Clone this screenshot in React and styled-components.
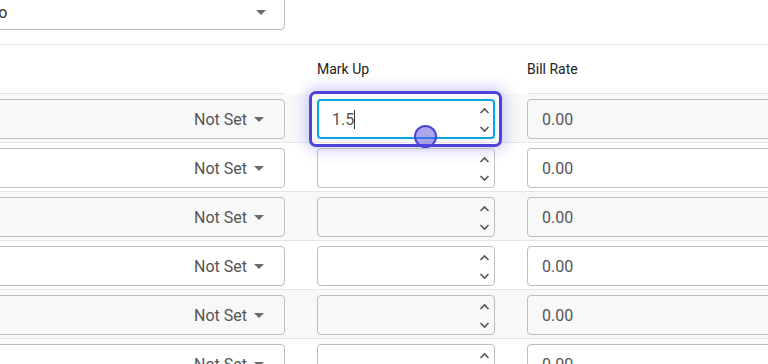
import React from 'react';
import styled, { createGlobalStyle, css } from 'styled-components';

const GlobalStyle = createGlobalStyle`
	body {
		margin: 0;
		background: #fff;
		font-family: Roboto, 'Liberation Sans', sans-serif;
		overflow: hidden;
	}
`;

const Page = styled.div`
	width: 768px;
	height: 364px;
	overflow: hidden;
`;

const Frame = styled.div`
	margin-left: -40px;
	width: 900px;
`;

const TopBar = styled.div`
	margin-top: -10px;
	padding-bottom: 14px;
	border-bottom: 1px solid #e5e5e5;
`;

const SelectBox = styled.div`
	width: 325px;
	height: 40px;
	box-sizing: border-box;
	border: 1px solid #bdbdbd;
	border-radius: 4px;
	display: flex;
	align-items: center;
	justify-content: space-between;
	padding: 4px 18px 0 13px;
	font-size: 16px;
	color: #333;
	background: #fff;
`;

const Caret = styled.span`
	width: 0;
	height: 0;
	border-left: 5px solid transparent;
	border-right: 5px solid transparent;
	border-top: 5px solid #6b6b6b;
	margin-left: ${(p) => p.$gap || 0}px;
`;

const Grid = styled.div`
	display: grid;
	grid-template-columns: 325px 178px 300px;
	column-gap: 32px;
`;

const HeadRow = styled.div`
	display: contents;
`;

const HeadCell = styled.div`
	height: 49px;
	border-bottom: 1px solid #e5e5e5;
	font-size: 14px;
	color: #222;
	padding-top: 16px;
	box-sizing: border-box;
`;

const Row = styled.div`
	grid-column: 1 / -1;
	display: grid;
	grid-template-columns: 325px 178px 300px;
	column-gap: 32px;
	padding: 5px 200px 3px;
	margin: 0 -200px;
	border-bottom: 1px solid #e5e5e5;
	background: ${(p) => (p.$shaded ? '#f8f8f8' : '#fff')};
`;

const fieldBase = css`
	height: 40px;
	box-sizing: border-box;
	border: 1px solid #bdbdbd;
	border-radius: 4px;
	display: flex;
	align-items: center;
	font-size: 16px;
	color: #555;
`;

const StatusSelect = styled.div`
	${fieldBase}
	justify-content: flex-end;
	padding-right: 20px;
`;

const NumberWrap = styled.div`
	position: relative;
`;

const NumberField = styled.div`
	${fieldBase}
	justify-content: space-between;
	padding: 0 4px 0 14px;
	${(p) =>
		p.$focused &&
		css`
			border: 2px solid #08a5e3;
			background: #fff;
			padding-left: 13px;
			padding-right: 3px;
		`}
`;

const Value = styled.span`
	color: #555;
`;

const TextCaret = styled.span`
	display: inline-block;
	width: 1px;
	height: 19px;
	background: #333;
	vertical-align: -4px;
`;

const Spinner = styled.div`
	display: flex;
	flex-direction: column;
	gap: 12px;
	align-items: center;
	padding-top: 1px;
`;

const FocusRing = styled.div`
	position: absolute;
	inset: -8px -7px -8px -8px;
	border: 3px solid #4b43d9;
	border-radius: 7px;
	box-shadow: 0 0 14px 3px rgba(85, 75, 230, 0.3);
	pointer-events: none;
`;

const ClickDot = styled.div`
	position: absolute;
	left: 97px;
	top: 26px;
	width: 19px;
	height: 19px;
	border-radius: 50%;
	border: 2px solid #4b43d9;
	background: rgba(90, 80, 220, 0.5);
	pointer-events: none;
`;

const RateField = styled.div`
	${fieldBase}
	padding-left: 14px;
`;

const Chevron = ({ up }) => (
	<svg width="11" height="7" viewBox="0 0 11 7">
		<path
			d={up ? 'M1.5 6 L5.5 2 L9.5 6' : 'M1.5 1 L5.5 5 L9.5 1'}
			fill="none"
			stroke="#555"
			strokeWidth="1.6"
		/>
	</svg>
);

const rows = [
	{ markup: '1.5', focused: true },
	{ markup: '' },
	{ markup: '' },
	{ markup: '' },
	{ markup: '' },
	{ markup: '' },
];

export default function App() {
	return (
		<Page>
			<GlobalStyle />
			<Frame>
				<TopBar>
					<SelectBox>
						<span>Auto</span>
						<Caret />
					</SelectBox>
				</TopBar>
				<Grid>
					<HeadRow>
						<HeadCell />
						<HeadCell>Mark Up</HeadCell>
						<HeadCell>Bill Rate</HeadCell>
					</HeadRow>
					{rows.map((r, i) => (
						<Row key={i} $shaded={i % 2 === 0}>
							<StatusSelect>
								Not Set
								<Caret $gap={7} />
							</StatusSelect>
							<NumberWrap>
								<NumberField $focused={r.focused}>
									<Value>
										{r.markup}
										{r.focused && <TextCaret />}
									</Value>
									<Spinner>
										<Chevron up />
										<Chevron />
									</Spinner>
								</NumberField>
								{r.focused && <FocusRing />}
								{r.focused && <ClickDot />}
							</NumberWrap>
							<RateField>0.00</RateField>
						</Row>
					))}
				</Grid>
			</Frame>
		</Page>
	);
}
